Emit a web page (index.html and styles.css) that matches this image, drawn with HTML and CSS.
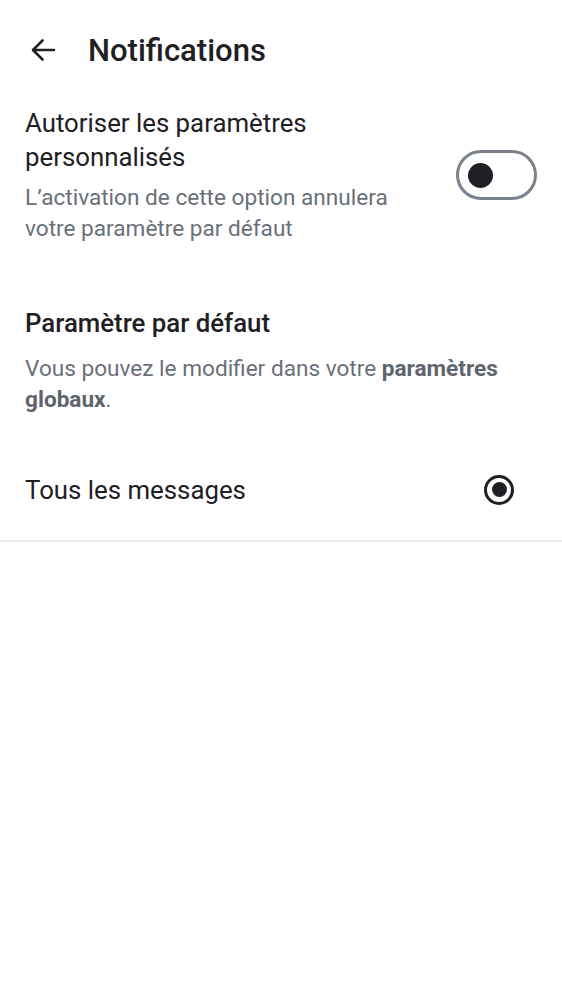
FILE: index.html
```html
<!DOCTYPE html>
<html lang="fr">
<head>
<meta charset="utf-8">
<link rel="stylesheet" href="styles.css">
</head>
<body>
<div class="page">
  <header class="topbar">
    <svg class="back" width="26" height="26" viewBox="0 0 26 26" aria-hidden="true">
      <path d="M24 13H3.5M12.5 3.5L3 13l9.5 9.5" fill="none" stroke="#1f2024" stroke-width="2.6" stroke-linecap="round" stroke-linejoin="round"/>
    </svg>
    <h1 class="title">Notifications</h1>
  </header>

  <section class="custom">
    <div class="custom-text">
      <div class="label">Autoriser les paramètres personnalisés</div>
      <div class="hint">L’activation de cette option annulera votre paramètre par défaut</div>
    </div>
    <div class="toggle"><span class="knob"></span></div>
  </section>

  <section class="default">
    <h2 class="section-title">Paramètre par défaut</h2>
    <p class="hint">Vous pouvez le modifier dans votre <b>paramètres globaux</b>.</p>
  </section>

  <div class="option">
    <span class="option-label">Tous les messages</span>
    <span class="radio"><span class="dot"></span></span>
  </div>
</div>
</body>
</html>
```

FILE: styles.css
```css
html, body {
  margin: 0;
  padding: 0;
  background: #ffffff;
}
body {
  font-family: Roboto, "Noto Sans", sans-serif;
  color: #1f2024;
}
.page {
  width: 562px;
}
.topbar {
  display: flex;
  align-items: center;
  height: 100px;
  padding-left: 30px;
  box-sizing: border-box;
}
.back {
  display: block;
  margin-right: 32px;
}
.title {
  margin: 0;
  font-size: 31px;
  font-weight: 500;
  color: #1f2024;
}
.custom {
  display: flex;
  align-items: flex-start;
  padding: 6px 25px 0 25px;
}
.custom-text {
  flex: 1;
  padding-right: 50px;
}
.label {
  font-size: 25.8px;
  line-height: 34px;
  color: #1f2024;
}
.hint {
  font-size: 22.6px;
  line-height: 31px;
  color: #6a7079;
  margin: 0;
}
.hint b {
  font-weight: 700;
  color: #5e646c;
}
.custom .hint {
  margin-top: 8px;
}
.toggle {
  flex: none;
  width: 81px;
  height: 50px;
  box-sizing: border-box;
  border: 3px solid #7b818a;
  border-radius: 25px;
  display: flex;
  align-items: center;
  padding-left: 9px;
  margin-top: 44px;
}
.knob {
  width: 25px;
  height: 25px;
  border-radius: 50%;
  background: #1f2024;
}
.default {
  padding: 62px 25px 0 25px;
}
.section-title {
  margin: 0;
  font-size: 25.8px;
  font-weight: 500;
  line-height: 34px;
  color: #1f2024;
}
.default .hint {
  margin-top: 13px;
}
.option {
  display: flex;
  align-items: center;
  justify-content: space-between;
  height: 100px;
  margin-top: 24.5px;
  padding: 0 48px 0 25px;
  border-bottom: 2px solid #ebebeb;
}
.option-label {
  font-size: 25.8px;
  color: #1f2024;
}
.radio {
  width: 30px;
  height: 30px;
  box-sizing: border-box;
  border: 3.5px solid #1f2024;
  border-radius: 50%;
  display: flex;
  align-items: center;
  justify-content: center;
}
.dot {
  width: 15px;
  height: 15px;
  border-radius: 50%;
  background: #1f2024;
}
```
